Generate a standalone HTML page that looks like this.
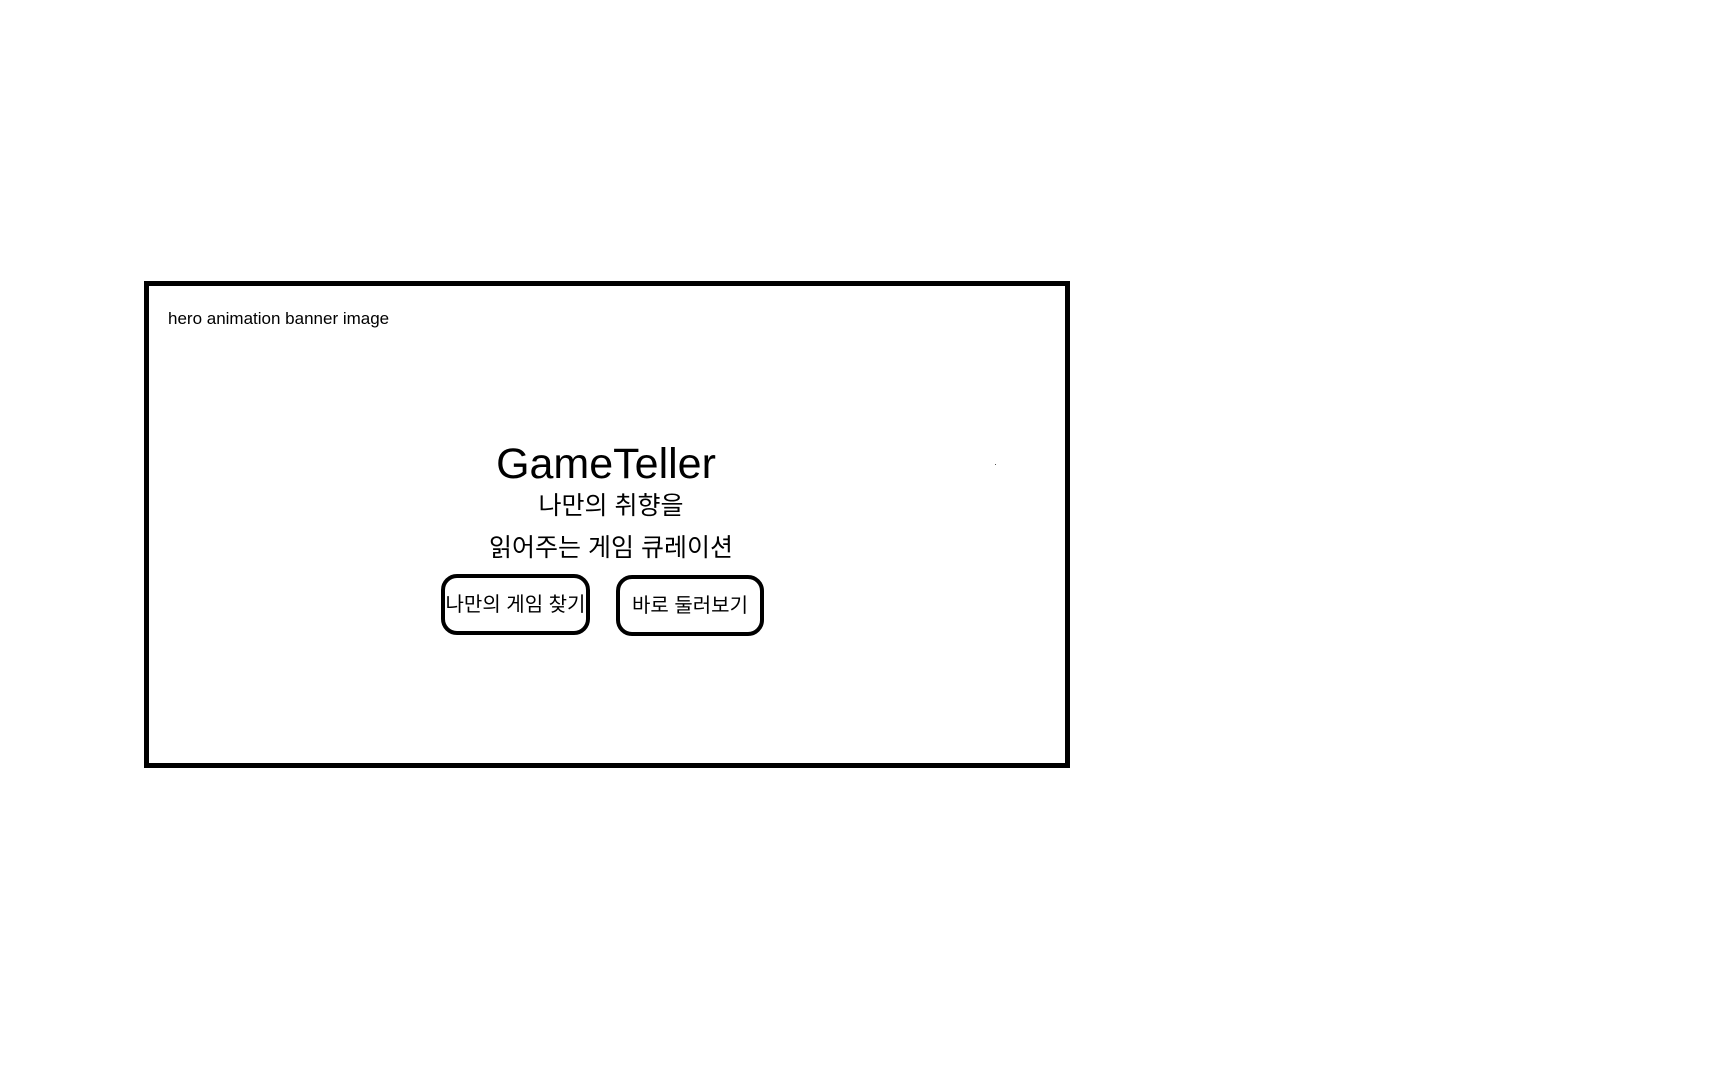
<!DOCTYPE html>
<html><head><meta charset="utf-8"><style>
html,body{margin:0;padding:0;background:#fff;width:1728px;height:1080px;overflow:hidden;}
body{position:relative;font-family:"Liberation Sans","Noto Sans CJK KR",sans-serif;color:#000;}
.box{position:absolute;left:144px;top:281px;width:916px;height:477px;border:5px solid #000;}
.lbl{position:absolute;left:168px;top:309px;font-size:17px;}
.c{position:absolute;white-space:nowrap;text-align:center;}
.btn{position:absolute;border:4px solid #000;border-radius:16px;box-sizing:border-box;display:flex;align-items:center;justify-content:center;font-size:20px;white-space:nowrap;padding-bottom:4px;}
</style></head><body>
<div class="box"></div>
<div class="lbl">hero animation banner image</div>
<div class="c" style="left:411px;width:390px;top:439px;font-size:43px;line-height:50px;">GameTeller</div>
<div class="c" style="left:416px;width:390px;top:491px;font-size:25px;line-height:30px;">나만의 취향을</div>
<div class="c" style="left:416px;width:390px;top:533px;font-size:25px;line-height:30px;letter-spacing:0px;">읽어주는 게임 큐레이션</div>
<div class="btn" style="left:441px;top:574px;width:149px;height:61px;">나만의 게임 찾기</div>
<div class="btn" style="left:616px;top:575px;width:148px;height:61px;">바로 둘러보기</div>
<div style="position:absolute;left:995px;top:464px;width:1px;height:1px;background:#555;"></div>
</body></html>
